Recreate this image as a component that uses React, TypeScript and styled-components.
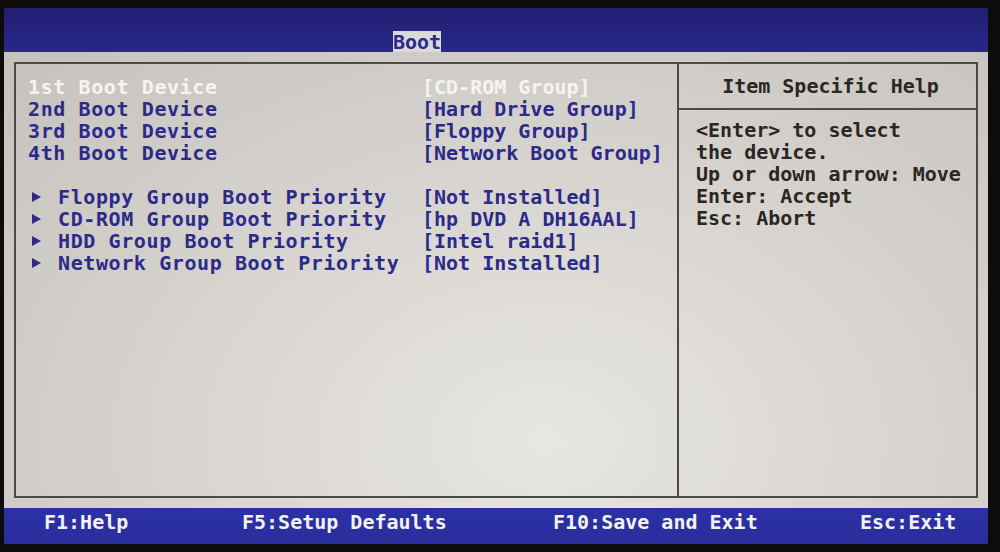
import React from "react";
import styled, { createGlobalStyle } from "styled-components";

const Global = createGlobalStyle`
  html, body { margin: 0; padding: 0; background: #0e0c0b; }
  body { width: 1000px; height: 552px; overflow: hidden; }
  * { box-sizing: border-box; }
`;

const Screen = styled.div`
  margin: 8px 12px 0 4px;
  width: 984px;
  height: 536px;
  display: flex;
  flex-direction: column;
  font-family: "DejaVu Sans Mono", "Liberation Mono", monospace;
  font-weight: bold;
  font-size: 20px;
  line-height: 22px;
`;

const Header = styled.div`
  height: 44px;
  background: linear-gradient(180deg, #221f70 0%, #28288a 100%);
  display: flex;
  align-items: flex-end;
  padding-left: 389px;
`;

const Tab = styled.div`
  height: 21px;
  background: #dcdad6;
  color: #2a2a8e;
  line-height: 22px;
`;

const Main = styled.div`
  flex: 1;
  padding: 10px;
  background: radial-gradient(ellipse at 55% 85%, #e8e6e1 0%, #d9d6d1 45%, #c5c1bc 100%);
`;

const Frame = styled.div`
  height: 100%;
  border: 2px solid #4d4945;
  display: grid;
  grid-template-columns: 663px 1fr;
`;

const LeftPanel = styled.div`
  border-right: 2px solid #4d4945;
  padding: 12px 0 0 12px;
  display: grid;
  grid-template-columns: 394px 1fr;
  align-content: start;
`;

const Label = styled.div<{ $sel?: boolean }>`
  color: ${(p) => (p.$sel ? "#f6f4f0" : "#2b2a8a")};
  white-space: pre;
  letter-spacing: 0.6px;
  display: flex;
  align-items: center;
`;

const Value = styled.div<{ $sel?: boolean }>`
  color: ${(p) => (p.$sel ? "#f6f4f0" : "#2b2a8a")};
  white-space: pre;
`;

const Spacer = styled.div`
  height: 22px;
  grid-column: 1 / span 2;
`;

const Arrow = styled.span`
  display: inline-block;
  width: 0;
  height: 0;
  border-top: 5px solid transparent;
  border-bottom: 5px solid transparent;
  border-left: 9px solid #2b2a8a;
  margin: 0 17px 0 4px;
`;

const RightPanel = styled.div`
  display: flex;
  flex-direction: column;
`;

const HelpTitle = styled.div`
  height: 46px;
  border-bottom: 2px solid #4d4945;
  display: flex;
  align-items: center;
  justify-content: center;
  padding-left: 6px;
  color: #2a2622;
`;

const HelpBody = styled.div`
  padding: 9px 0 0 17px;
  color: #2a2622;
  white-space: pre;
`;

const Footer = styled.div`
  height: 36px;
  background: linear-gradient(180deg, #2b30a6 0%, #2a2e9c 100%);
  display: grid;
  grid-template-columns: 198px 311px 307px auto;
  padding: 0 0 8px 40px;
  align-items: center;
  color: #f4f2ee;
  white-space: pre;
`;

const boot = [
  ["1st Boot Device", "[CD-ROM Group]", true],
  ["2nd Boot Device", "[Hard Drive Group]", false],
  ["3rd Boot Device", "[Floppy Group]", false],
  ["4th Boot Device", "[Network Boot Group]", false],
] as const;

const groups = [
  ["Floppy Group Boot Priority", "[Not Installed]"],
  ["CD-ROM Group Boot Priority", "[hp DVD A DH16AAL]"],
  ["HDD Group Boot Priority", "[Intel raid1]"],
  ["Network Group Boot Priority", "[Not Installed]"],
];

export default function App() {
  return (
    <>
      <Global />
      <Screen>
        <Header>
          <Tab>Boot</Tab>
        </Header>
        <Main>
          <Frame>
            <LeftPanel>
              {boot.map(([l, v, s]) => (
                <React.Fragment key={l}>
                  <Label $sel={s}>{l}</Label>
                  <Value $sel={s}>{v}</Value>
                </React.Fragment>
              ))}
              <Spacer />
              {groups.map(([l, v]) => (
                <React.Fragment key={l}>
                  <Label>
                    <Arrow />
                    {l}
                  </Label>
                  <Value>{v}</Value>
                </React.Fragment>
              ))}
            </LeftPanel>
            <RightPanel>
              <HelpTitle>Item Specific Help</HelpTitle>
              <HelpBody>
                {"<Enter> to select\nthe device.\nUp or down arrow: Move\nEnter: Accept\nEsc: Abort"}
              </HelpBody>
            </RightPanel>
          </Frame>
        </Main>
        <Footer>
          <span>F1:Help</span>
          <span>F5:Setup Defaults</span>
          <span>F10:Save and Exit</span>
          <span>Esc:Exit</span>
        </Footer>
      </Screen>
    </>
  );
}
